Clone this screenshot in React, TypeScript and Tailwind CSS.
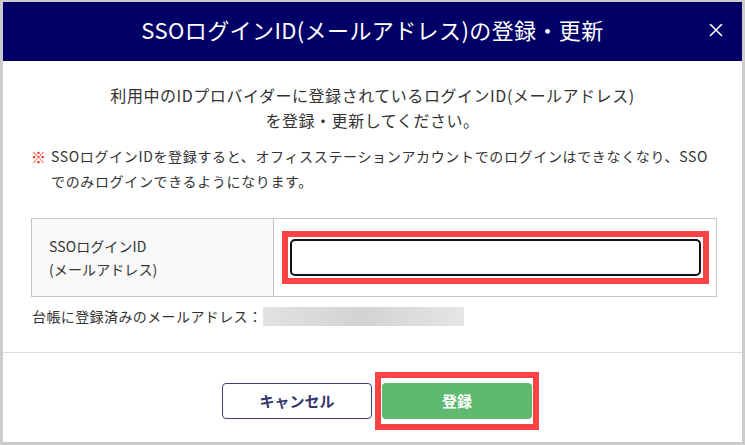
import React from 'react';

const FONT = { fontFamily: '"Noto Sans CJK JP", "Noto Sans", sans-serif' };

function CloseIcon() {
  return (
    <svg width="14" height="14" viewBox="0 0 14 14" className="block">
      <path d="M1.5 1.5 L12.5 12.5 M12.5 1.5 L1.5 12.5" stroke="#fff" strokeWidth="1.6" strokeLinecap="round" />
    </svg>
  );
}

export default function App() {
  return (
    <div className="w-[745px] h-[445px] bg-[#cdcbcb] pt-[2px] pl-[3px] pr-[3px] pb-[3px]" style={FONT}>
      <div className="w-full h-full bg-white flex flex-col">
        {/* header */}
        <div className="h-[59px] bg-[#000066] relative flex items-center justify-center shrink-0 pb-[5px]">
          <h1 className="text-white text-[22px] leading-none tracking-[0.4px]">
            SSOログインID(メールアドレス)の登録・更新
          </h1>
          <button className="absolute right-[19px] top-[21px]">
            <CloseIcon />
          </button>
        </div>

        {/* body */}
        <div className="h-[291px] pt-[22px] text-[#333]">
          <p className="text-center text-[16px] leading-[25px] tracking-[0.55px]">
            利用中のIDプロバイダーに登録されているログインID(メールアドレス)
            <br />
            を登録・更新してください。
          </p>

          <div className="mt-[11px] pl-[28px] flex text-[14px] leading-[25px] tracking-[0.65px]">
            <span className="w-[20px] shrink-0 text-[#ff1a1a] text-[15px] font-bold">※</span>
            <p className="whitespace-nowrap">
              SSOログインIDを登録すると、オフィスステーションアカウントでのログインはできなくなり、SSO
              <br />
              でのみログインできるようになります。
            </p>
          </div>

          <div className="mt-[24px] ml-[28px] w-[686px] h-[79px] border border-[#c6c6c6] flex">
            <div className="w-[242px] bg-[#f8f8f8] border-r border-[#c6c6c6] pl-[17px] flex flex-col justify-center text-[14px] leading-[23px] tracking-[0.1px]">
              <span>SSOログインID</span>
              <span>(メールアドレス)</span>
            </div>
            <div className="flex-1 flex items-center pl-[8px] pr-[7px]">
              <div className="flex-1 border-[6px] border-[#fc4343] p-[2px]">
                <input
                  type="text"
                  className="block w-full h-[37px] border-2 border-[#111] rounded-[5px] bg-white outline-none"
                />
              </div>
            </div>
          </div>

          <div className="mt-[9px] ml-[29px] flex items-center text-[14px] leading-[20px] tracking-[0.4px]">
            <span>台帳に登録済みのメールアドレス：</span>
            <span className="ml-[1px] w-[201px] h-[19px] bg-gradient-to-r from-[#e2e2e2] via-[#d3d3d3] to-[#e6e6e6]" />
          </div>
        </div>

        {/* footer */}
        <div className="flex-1 border-t border-[#dddddd] pt-[19px]">
          <div className="flex items-center ml-[219px] gap-[3px]">
            <button className="w-[150px] h-[36px] border border-[#3f3f7f] rounded-[4px] bg-white text-[#34346f] text-[15px] font-bold">
              キャンセル
            </button>
            <div className="border-[6px] border-[#fc4343] px-[1px] py-[5px]">
              <button className="block w-[150px] h-[36px] rounded-[4px] bg-[#5fb96e] text-white text-[15px] font-bold">
                登録
              </button>
            </div>
          </div>
        </div>
      </div>
    </div>
  );
}
